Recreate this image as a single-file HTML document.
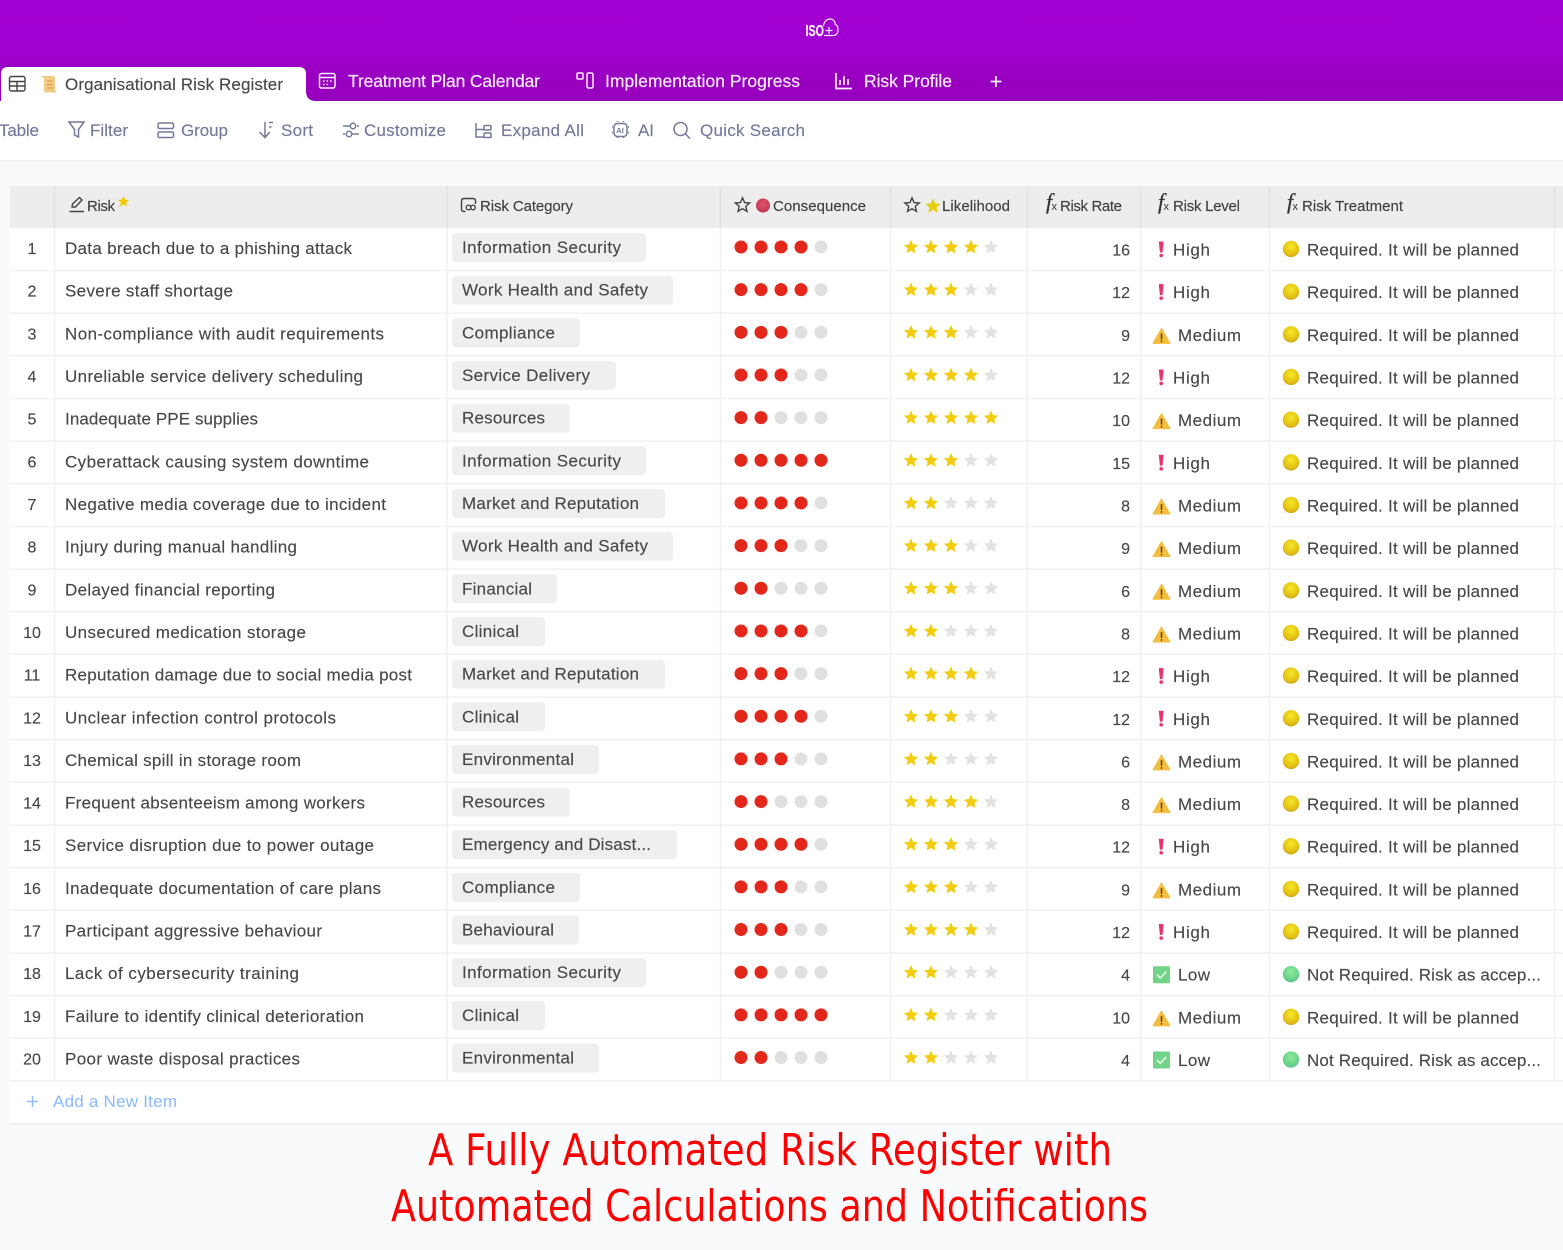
<!DOCTYPE html>
<html lang="en"><head><meta charset="utf-8"><title>Organisational Risk Register</title>
<style>
html,body{margin:0;padding:0;background:#f9fafc;width:1563px;height:1250px;overflow:hidden}
svg{display:block;font-family:"Liberation Sans",sans-serif;filter:blur(.25px)}
.t{font-size:17px;fill:#484848;stroke:#484848;stroke-width:.15px}
.n{font-size:16px;fill:#484848;stroke:#484848;stroke-width:.15px}
.b{font-size:17px;fill:#74789a;stroke:#74789a;stroke-width:.15px}
.w{font-size:17.5px;fill:#f8ecfc;stroke:#f8ecfc;stroke-width:.2px}
.h{font-size:15px;fill:#404040;stroke:#404040;stroke-width:.15px}
.g{fill:#efefef}
.f{font-family:"Liberation Serif",serif;font-style:italic;font-size:22px;fill:#333;stroke:#333;stroke-width:.3px}
.x{font-family:"Liberation Sans",sans-serif;font-size:11px;font-style:normal;fill:#333}
.i{fill:none;stroke:#74789a;stroke-width:1.5}
.wi{fill:none;stroke:#f8ecfc;stroke-width:1.5}
.k{fill:none;stroke:#444;stroke-width:1.4}
.c{font-family:"Comic Sans MS","DejaVu Sans",sans-serif;font-size:44px;fill:#f00}
</style></head><body>
<svg width="1563" height="1250" viewBox="0 0 1563 1250" xmlns="http://www.w3.org/2000/svg">
<defs>
<linearGradient id="pg" x1="0" y1="0" x2="0" y2="1"><stop offset="0" stop-color="#a100d2"/><stop offset=".55" stop-color="#a000d0"/><stop offset=".65" stop-color="#9a00c4"/><stop offset="1" stop-color="#9500bb"/></linearGradient>
<radialGradient id="yb" cx=".5" cy=".35" r=".7"><stop offset="0" stop-color="#f7e82a"/><stop offset=".7" stop-color="#e3bf12"/><stop offset="1" stop-color="#c99a28"/></radialGradient>
<radialGradient id="gb" cx=".5" cy=".35" r=".7"><stop offset="0" stop-color="#8eea96"/><stop offset=".7" stop-color="#66d38a"/><stop offset="1" stop-color="#6fb8a0"/></radialGradient>
<radialGradient id="rb" cx=".5" cy=".4" r=".7"><stop offset="0" stop-color="#e0566e"/><stop offset="1" stop-color="#b52f4c"/></radialGradient>
<path id="st" d="M0-7.2 2.1-2.4 7.2-2 3.3 1.4 4.5 6.4 0 3.7-4.5 6.4-3.3 1.4-7.2-2-2.1-2.4Z"/>
<g id="d2"><circle cx="741" cy="247" r="6.5" fill="#e3271a"/><circle cx="761" cy="247" r="6.5" fill="#e3271a"/><circle cx="781" cy="247" r="6.5" fill="#e0e0e0"/><circle cx="801" cy="247" r="6.5" fill="#e0e0e0"/><circle cx="821" cy="247" r="6.5" fill="#e0e0e0"/></g>
<g id="d3"><use href="#d2"/><circle cx="781" cy="247" r="6.5" fill="#e3271a"/></g>
<g id="d4"><use href="#d3"/><circle cx="801" cy="247" r="6.5" fill="#e3271a"/></g>
<g id="d5"><use href="#d4"/><circle cx="821" cy="247" r="6.5" fill="#e3271a"/></g>
<g id="s2"><use href="#st" x="911" y="247" fill="#f3cd0d"/><use href="#st" x="931" y="247" fill="#f3cd0d"/><use href="#st" x="951" y="247" fill="#e2e2e2"/><use href="#st" x="971" y="247" fill="#e2e2e2"/><use href="#st" x="991" y="247" fill="#e2e2e2"/></g>
<g id="s3"><use href="#s2"/><use href="#st" x="951" y="247" fill="#f3cd0d"/></g>
<g id="s4"><use href="#s3"/><use href="#st" x="971" y="247" fill="#f3cd0d"/></g>
<g id="s5"><use href="#s4"/><use href="#st" x="991" y="247" fill="#f3cd0d"/></g>
<g id="ih"><path d="M1158.8 241.500h4.800l-1.100 11h-2.600Z" fill="#e8336d"/><circle cx="1161.200" cy="255.500" r="1.800" fill="#e8336d"/></g>
<g id="im"><path d="M1161.500 243 1170 258h-17Z" fill="#f5bd3d" stroke="#f5bd3d" stroke-linejoin="round"/><path d="M1161.500 248v6M1161.500 255.200v1.600" stroke="#5a3d10" stroke-width="1.500"/></g>
<g id="il"><rect x="1153" y="241" width="17" height="17" rx="1.500" fill="#72d489"/><path d="M1157 249.500l3.300 3.300 6-6.500" fill="none" stroke="#e9fbe9" stroke-width="1.600"/></g>
<circle id="cy" cx="1291" cy="249" r="8.200" fill="url(#yb)"/>
<circle id="cg" cx="1291" cy="249" r="8.200" fill="url(#gb)"/>
<g id="fx"><text class="f" x="2" y="0">f</text><text class="x" x="7.500" y="1">x</text></g>
</defs>

<rect width="1563" height="1250" fill="#f9fafc"/>
<rect width="1563" height="102" fill="url(#pg)"/>
<rect y="101" width="1563" height="59" fill="#fff"/>
<rect y="160" width="1563" height="2" fill="#f1f2f5"/>
<path d="M1 101V74q0-7 7-7H299q7 0 7 7V91q0 10 10 10Z" fill="#fff"/>

<!-- logo -->
<text x="805.500" y="36" font-size="15.500" font-weight="bold" fill="#f8ecfc" stroke="#f8ecfc" stroke-width=".3" textLength="18.500" lengthAdjust="spacingAndGlyphs">ISO</text>
<path d="M823.500 26C824 21.500 827 19 830 19C833 19 835 21 835.300 24.500C837 25 838 27 838 30C838 33.500 836 35.500 833 35.500H824M825.500 30.500h7M829 27v7" fill="none" stroke="#f8ecfc" stroke-width="1.200"/>

<!-- tabs -->
<g class="k"><rect x="9.500" y="76.500" width="15.500" height="14.500" rx="2"/><path d="M9.500 81.500H25M9.500 86H25M17 81.500V91"/></g>
<path d="M41 76h11.500c1.500 0 2.500 1 2.500 2.500V90l2 2.500H46c-1.500 0-2-1-2-2.500V79c0-1.500-1.500-1.500-3-3Z" fill="#f0cb85"/><path d="M47 81h6M47 84.500h6M47 88h6" stroke="#d99c45" stroke-width="1.100"/>
<text x="65" y="90" class="t" textLength="218">Organisational Risk Register</text>
<g class="wi"><rect x="319.500" y="73.500" width="15.500" height="14.500" rx="2"/><path d="M319.500 77.500H335M323 81h1.600M326.500 81h1.600M330 81h1.600M323 84.500h1.600M326.500 84.500h1.600"/></g>
<text x="348" y="87" class="w" textLength="192">Treatment Plan Calendar</text>
<g class="wi"><rect x="577" y="73" width="6" height="6" rx="1"/><rect x="587" y="73" width="6" height="15" rx="1.500"/></g>
<text x="605" y="87" class="w" textLength="195">Implementation Progress</text>
<g class="wi"><path d="M836 73v15.500h16M840 85v-5M844 85v-9M848 85v-6" stroke-width="1.700"/></g>
<text x="864" y="87" class="w" textLength="88">Risk Profile</text>
<path d="M990.500 81.500h11M996 76v11" stroke="#f8ecfc" stroke-width="1.800" fill="none"/>

<!-- toolbar -->
<text x="-1" y="136" class="b" textLength="40">Table</text>
<path class="i" d="M69 122h15l-5.500 7.500V137l-4-2v-5.500Z"/>
<text x="90" y="136" class="b" textLength="38">Filter</text>
<g class="i"><rect x="158" y="123" width="15.500" height="5.500" rx="1.500"/><rect x="158" y="132" width="15.500" height="5.500" rx="1.500"/></g>
<text x="181" y="136" class="b" textLength="47">Group</text>
<path class="i" d="M265 122v15M259.500 132l5.500 5.500 5-5.500M269 122.500h4M269 127h2.500"/>
<text x="281" y="136" class="b" textLength="32">Sort</text>
<g class="i"><path d="M343 126h7M357 126h2M343 134h2M352 134h7"/><circle cx="353" cy="126" r="2.700"/><circle cx="349" cy="134" r="2.700"/></g>
<text x="364" y="136" class="b" textLength="82">Customize</text>
<g class="i"><path d="M476 123v14h8M476 129.500h8"/><rect x="484" y="125.500" width="7" height="4.500" rx="1"/><rect x="484" y="133" width="7" height="4.500" rx="1"/></g>
<text x="501" y="136" class="b" textLength="83">Expand All</text>
<g class="i"><rect x="614" y="123.500" width="13" height="13" rx="3.500"/><path d="M617.500 122v-1M623.500 122v-1M617.500 138v-1M623.500 138v-1M613 127h-1M613 132.500h-1M629 127h-1M629 132.500h-1"/></g>
<text x="616.300" y="132.800" font-size="7.500" font-weight="bold" fill="#74789a">AI</text>
<text x="638" y="136" class="b" textLength="16">AI</text>
<g class="i"><circle cx="680.500" cy="129" r="6.500"/><path d="M685.500 134l4.500 4.500"/></g>
<text x="700" y="136" class="b" textLength="105">Quick Search</text>

<!-- table -->
<rect x="10" y="186" width="1553" height="937" fill="#fff"/>
<rect x="10" y="186" width="1553" height="42" fill="#ededed"/>
<rect x="10" y="1123" width="1553" height="1.500" fill="#eeeff1"/>

<path class="k" d="M69.500 211.500h14.500M72 207l.5-3 7-6.500 2.500 2.500-6.500 7Z" stroke-width="1.200"/>
<text class="h" x="87" y="211" textLength="28">Risk</text>
<use href="#st" transform="translate(123.500 201.500) scale(.8)" fill="#f3c90d"/>
<g class="k" stroke-width="1.200"><path d="M465.500 211.500h-1.500q-2.500 0-2.500-2.500v-8q0-2.500 2.500-2.500h9q2.500 0 2.500 2.500v3"/><circle cx="468.500" cy="207.500" r="2.300"/><circle cx="473" cy="207.500" r="2.300"/></g>
<text class="h" x="480" y="211" textLength="93">Risk Category</text>
<use href="#st" transform="translate(742.500 205)" fill="none" stroke="#444" stroke-width="1.400"/>
<circle cx="763" cy="205.500" r="7" fill="url(#rb)"/>
<text class="h" x="773" y="211" textLength="93">Consequence</text>
<use href="#st" transform="translate(912 205)" fill="none" stroke="#444" stroke-width="1.400"/>
<use href="#st" transform="translate(933 206) scale(1.050)" fill="#e6cf07"/>
<text class="h" x="942" y="211" textLength="68">Likelihood</text>
<use href="#fx" x="1044" y="209"/>
<text class="h" x="1060" y="211" textLength="62">Risk Rate</text>
<use href="#fx" x="1156" y="209"/>
<text class="h" x="1173" y="211" textLength="67">Risk Level</text>
<use href="#fx" x="1285" y="209"/>
<text class="h" x="1302" y="211" textLength="101">Risk Treatment</text>

<g transform="translate(0,0)"><text class="n" x="32" y="254" text-anchor="middle">1</text><text class="t" x="65" y="254" textLength="287">Data breach due to a phishing attack</text><rect class="g" x="452" y="233" width="194" height="29" rx="4"/><text class="t" x="462" y="253" textLength="159">Information Security</text><use href="#d4"/><use href="#s4"/><text class="n" x="1130" y="255.500" text-anchor="end">16</text><use href="#ih"/><text class="t" x="1173" y="255.500" textLength="37">High</text><use href="#cy"/><text class="t" x="1307" y="255.500" textLength="212">Required. It will be planned</text></g>
<g transform="translate(0,42.660)"><text class="n" x="32" y="254" text-anchor="middle">2</text><text class="t" x="65" y="254" textLength="168">Severe staff shortage</text><rect class="g" x="452" y="233" width="221" height="29" rx="4"/><text class="t" x="462" y="253" textLength="186">Work Health and Safety</text><use href="#d4"/><use href="#s3"/><text class="n" x="1130" y="255.500" text-anchor="end">12</text><use href="#ih"/><text class="t" x="1173" y="255.500" textLength="37">High</text><use href="#cy"/><text class="t" x="1307" y="255.500" textLength="212">Required. It will be planned</text></g>
<g transform="translate(0,85.320)"><text class="n" x="32" y="254" text-anchor="middle">3</text><text class="t" x="65" y="254" textLength="319">Non-compliance with audit requirements</text><rect class="g" x="452" y="233" width="128" height="29" rx="4"/><text class="t" x="462" y="253" textLength="93">Compliance</text><use href="#d3"/><use href="#s3"/><text class="n" x="1130" y="255.500" text-anchor="end">9</text><use href="#im"/><text class="t" x="1178" y="255.500" textLength="63">Medium</text><use href="#cy"/><text class="t" x="1307" y="255.500" textLength="212">Required. It will be planned</text></g>
<g transform="translate(0,127.980)"><text class="n" x="32" y="254" text-anchor="middle">4</text><text class="t" x="65" y="254" textLength="298">Unreliable service delivery scheduling</text><rect class="g" x="452" y="233" width="164" height="29" rx="4"/><text class="t" x="462" y="253" textLength="128">Service Delivery</text><use href="#d3"/><use href="#s4"/><text class="n" x="1130" y="255.500" text-anchor="end">12</text><use href="#ih"/><text class="t" x="1173" y="255.500" textLength="37">High</text><use href="#cy"/><text class="t" x="1307" y="255.500" textLength="212">Required. It will be planned</text></g>
<g transform="translate(0,170.640)"><text class="n" x="32" y="254" text-anchor="middle">5</text><text class="t" x="65" y="254" textLength="193">Inadequate PPE supplies</text><rect class="g" x="452" y="233" width="118" height="29" rx="4"/><text class="t" x="462" y="253" textLength="83">Resources</text><use href="#d2"/><use href="#s5"/><text class="n" x="1130" y="255.500" text-anchor="end">10</text><use href="#im"/><text class="t" x="1178" y="255.500" textLength="63">Medium</text><use href="#cy"/><text class="t" x="1307" y="255.500" textLength="212">Required. It will be planned</text></g>
<g transform="translate(0,213.300)"><text class="n" x="32" y="254" text-anchor="middle">6</text><text class="t" x="65" y="254" textLength="304">Cyberattack causing system downtime</text><rect class="g" x="452" y="233" width="194" height="29" rx="4"/><text class="t" x="462" y="253" textLength="159">Information Security</text><use href="#d5"/><use href="#s3"/><text class="n" x="1130" y="255.500" text-anchor="end">15</text><use href="#ih"/><text class="t" x="1173" y="255.500" textLength="37">High</text><use href="#cy"/><text class="t" x="1307" y="255.500" textLength="212">Required. It will be planned</text></g>
<g transform="translate(0,255.960)"><text class="n" x="32" y="254" text-anchor="middle">7</text><text class="t" x="65" y="254" textLength="321">Negative media coverage due to incident</text><rect class="g" x="452" y="233" width="213" height="29" rx="4"/><text class="t" x="462" y="253" textLength="177">Market and Reputation</text><use href="#d4"/><use href="#s2"/><text class="n" x="1130" y="255.500" text-anchor="end">8</text><use href="#im"/><text class="t" x="1178" y="255.500" textLength="63">Medium</text><use href="#cy"/><text class="t" x="1307" y="255.500" textLength="212">Required. It will be planned</text></g>
<g transform="translate(0,298.620)"><text class="n" x="32" y="254" text-anchor="middle">8</text><text class="t" x="65" y="254" textLength="232">Injury during manual handling</text><rect class="g" x="452" y="233" width="221" height="29" rx="4"/><text class="t" x="462" y="253" textLength="186">Work Health and Safety</text><use href="#d3"/><use href="#s3"/><text class="n" x="1130" y="255.500" text-anchor="end">9</text><use href="#im"/><text class="t" x="1178" y="255.500" textLength="63">Medium</text><use href="#cy"/><text class="t" x="1307" y="255.500" textLength="212">Required. It will be planned</text></g>
<g transform="translate(0,341.280)"><text class="n" x="32" y="254" text-anchor="middle">9</text><text class="t" x="65" y="254" textLength="210">Delayed financial reporting</text><rect class="g" x="452" y="233" width="105" height="29" rx="4"/><text class="t" x="462" y="253" textLength="70">Financial</text><use href="#d2"/><use href="#s3"/><text class="n" x="1130" y="255.500" text-anchor="end">6</text><use href="#im"/><text class="t" x="1178" y="255.500" textLength="63">Medium</text><use href="#cy"/><text class="t" x="1307" y="255.500" textLength="212">Required. It will be planned</text></g>
<g transform="translate(0,383.940)"><text class="n" x="32" y="254" text-anchor="middle">10</text><text class="t" x="65" y="254" textLength="241">Unsecured medication storage</text><rect class="g" x="452" y="233" width="93" height="29" rx="4"/><text class="t" x="462" y="253" textLength="57">Clinical</text><use href="#d4"/><use href="#s2"/><text class="n" x="1130" y="255.500" text-anchor="end">8</text><use href="#im"/><text class="t" x="1178" y="255.500" textLength="63">Medium</text><use href="#cy"/><text class="t" x="1307" y="255.500" textLength="212">Required. It will be planned</text></g>
<g transform="translate(0,426.600)"><text class="n" x="32" y="254" text-anchor="middle">11</text><text class="t" x="65" y="254" textLength="347">Reputation damage due to social media post</text><rect class="g" x="452" y="233" width="213" height="29" rx="4"/><text class="t" x="462" y="253" textLength="177">Market and Reputation</text><use href="#d3"/><use href="#s4"/><text class="n" x="1130" y="255.500" text-anchor="end">12</text><use href="#ih"/><text class="t" x="1173" y="255.500" textLength="37">High</text><use href="#cy"/><text class="t" x="1307" y="255.500" textLength="212">Required. It will be planned</text></g>
<g transform="translate(0,469.260)"><text class="n" x="32" y="254" text-anchor="middle">12</text><text class="t" x="65" y="254" textLength="271">Unclear infection control protocols</text><rect class="g" x="452" y="233" width="93" height="29" rx="4"/><text class="t" x="462" y="253" textLength="57">Clinical</text><use href="#d4"/><use href="#s3"/><text class="n" x="1130" y="255.500" text-anchor="end">12</text><use href="#ih"/><text class="t" x="1173" y="255.500" textLength="37">High</text><use href="#cy"/><text class="t" x="1307" y="255.500" textLength="212">Required. It will be planned</text></g>
<g transform="translate(0,511.920)"><text class="n" x="32" y="254" text-anchor="middle">13</text><text class="t" x="65" y="254" textLength="236">Chemical spill in storage room</text><rect class="g" x="452" y="233" width="147" height="29" rx="4"/><text class="t" x="462" y="253" textLength="112">Environmental</text><use href="#d3"/><use href="#s2"/><text class="n" x="1130" y="255.500" text-anchor="end">6</text><use href="#im"/><text class="t" x="1178" y="255.500" textLength="63">Medium</text><use href="#cy"/><text class="t" x="1307" y="255.500" textLength="212">Required. It will be planned</text></g>
<g transform="translate(0,554.580)"><text class="n" x="32" y="254" text-anchor="middle">14</text><text class="t" x="65" y="254" textLength="300">Frequent absenteeism among workers</text><rect class="g" x="452" y="233" width="118" height="29" rx="4"/><text class="t" x="462" y="253" textLength="83">Resources</text><use href="#d2"/><use href="#s4"/><text class="n" x="1130" y="255.500" text-anchor="end">8</text><use href="#im"/><text class="t" x="1178" y="255.500" textLength="63">Medium</text><use href="#cy"/><text class="t" x="1307" y="255.500" textLength="212">Required. It will be planned</text></g>
<g transform="translate(0,597.240)"><text class="n" x="32" y="254" text-anchor="middle">15</text><text class="t" x="65" y="254" textLength="309">Service disruption due to power outage</text><rect class="g" x="452" y="233" width="225" height="29" rx="4"/><text class="t" x="462" y="253" textLength="189">Emergency and Disast...</text><use href="#d4"/><use href="#s3"/><text class="n" x="1130" y="255.500" text-anchor="end">12</text><use href="#ih"/><text class="t" x="1173" y="255.500" textLength="37">High</text><use href="#cy"/><text class="t" x="1307" y="255.500" textLength="212">Required. It will be planned</text></g>
<g transform="translate(0,639.900)"><text class="n" x="32" y="254" text-anchor="middle">16</text><text class="t" x="65" y="254" textLength="316">Inadequate documentation of care plans</text><rect class="g" x="452" y="233" width="128" height="29" rx="4"/><text class="t" x="462" y="253" textLength="93">Compliance</text><use href="#d3"/><use href="#s3"/><text class="n" x="1130" y="255.500" text-anchor="end">9</text><use href="#im"/><text class="t" x="1178" y="255.500" textLength="63">Medium</text><use href="#cy"/><text class="t" x="1307" y="255.500" textLength="212">Required. It will be planned</text></g>
<g transform="translate(0,682.560)"><text class="n" x="32" y="254" text-anchor="middle">17</text><text class="t" x="65" y="254" textLength="257">Participant aggressive behaviour</text><rect class="g" x="452" y="233" width="127" height="29" rx="4"/><text class="t" x="462" y="253" textLength="92">Behavioural</text><use href="#d3"/><use href="#s4"/><text class="n" x="1130" y="255.500" text-anchor="end">12</text><use href="#ih"/><text class="t" x="1173" y="255.500" textLength="37">High</text><use href="#cy"/><text class="t" x="1307" y="255.500" textLength="212">Required. It will be planned</text></g>
<g transform="translate(0,725.220)"><text class="n" x="32" y="254" text-anchor="middle">18</text><text class="t" x="65" y="254" textLength="234">Lack of cybersecurity training</text><rect class="g" x="452" y="233" width="194" height="29" rx="4"/><text class="t" x="462" y="253" textLength="159">Information Security</text><use href="#d2"/><use href="#s2"/><text class="n" x="1130" y="255.500" text-anchor="end">4</text><use href="#il"/><text class="t" x="1178" y="255.500" textLength="32">Low</text><use href="#cg"/><text class="t" x="1307" y="255.500" textLength="234">Not Required. Risk as accep...</text></g>
<g transform="translate(0,767.880)"><text class="n" x="32" y="254" text-anchor="middle">19</text><text class="t" x="65" y="254" textLength="299">Failure to identify clinical deterioration</text><rect class="g" x="452" y="233" width="93" height="29" rx="4"/><text class="t" x="462" y="253" textLength="57">Clinical</text><use href="#d5"/><use href="#s2"/><text class="n" x="1130" y="255.500" text-anchor="end">10</text><use href="#im"/><text class="t" x="1178" y="255.500" textLength="63">Medium</text><use href="#cy"/><text class="t" x="1307" y="255.500" textLength="212">Required. It will be planned</text></g>
<g transform="translate(0,810.540)"><text class="n" x="32" y="254" text-anchor="middle">20</text><text class="t" x="65" y="254" textLength="235">Poor waste disposal practices</text><rect class="g" x="452" y="233" width="147" height="29" rx="4"/><text class="t" x="462" y="253" textLength="112">Environmental</text><use href="#d2"/><use href="#s2"/><text class="n" x="1130" y="255.500" text-anchor="end">4</text><use href="#il"/><text class="t" x="1178" y="255.500" textLength="32">Low</text><use href="#cg"/><text class="t" x="1307" y="255.500" textLength="234">Not Required. Risk as accep...</text></g>

<!-- grid lines -->
<g stroke="#f1f1f1" stroke-width="1.500" fill="none">
<path d="M10 270.500H1563M10 313.200H1563M10 355.800H1563M10 398.500H1563M10 441.100H1563M10 483.800H1563M10 526.500H1563M10 569.100H1563M10 611.800H1563M10 654.400H1563M10 697.100H1563M10 739.800H1563M10 782.400H1563M10 825.100H1563M10 867.700H1563M10 910.400H1563M10 953.100H1563M10 995.700H1563M10 1038.400H1563M10 1081H1563"/>
<path d="M54.500 228V1081M447 228V1081M720.500 228V1081M890.500 228V1081M1027.500 228V1081M1140.500 228V1081M1269.500 228V1081M1554.500 228V1081"/>
</g>
<path d="M54.500 186V228M447 186V228M720.500 186V228M890.500 186V228M1027.500 186V228M1140.500 186V228M1269.500 186V228M1554.500 186V228" stroke="#e1e1e1" stroke-width="1.500" fill="none"/>

<path d="M27 1101.500h11M32.500 1096v11" stroke="#90bdfd" stroke-width="1.500" fill="none"/>
<text x="53" y="1107" font-size="17" fill="#8ab9fd" textLength="124">Add a New Item</text>

<text class="c" x="428" y="1165" textLength="684" lengthAdjust="spacingAndGlyphs">A Fully Automated Risk Register with</text>
<text class="c" x="391" y="1221" textLength="757" lengthAdjust="spacingAndGlyphs">Automated Calculations and Notifications</text>
</svg>
</body></html>
